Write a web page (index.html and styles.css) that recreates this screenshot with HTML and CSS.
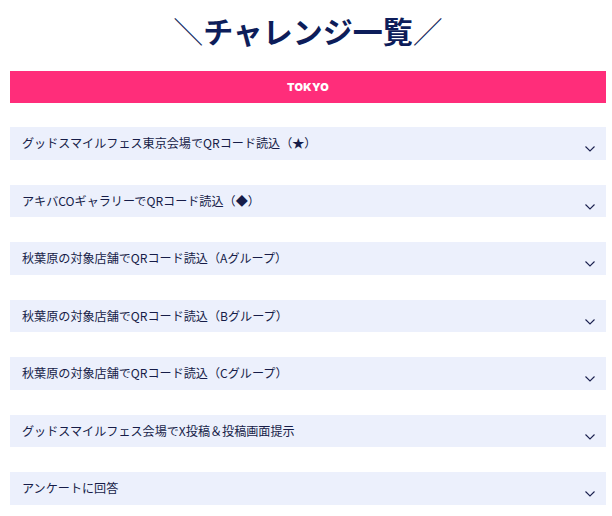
FILE: index.html
```html
<!DOCTYPE html>
<html lang="ja">
<head>
  <meta charset="UTF-8">
  <meta name="viewport" content="width=device-width, initial-scale=1.0">
  <title>チャレンジ一覧</title>
  <link rel="stylesheet" href="styles.css">
</head>
<body>
  <div class="wrap">
    <h1 class="title"><span class="slash">＼</span>チャレンジ一覧<span class="slash">／</span></h1>

    <div class="area">TOKYO</div>

    <ul class="challenges">
      <li class="challenge">
        <span class="challenge-name">グッドスマイルフェス東京会場でQRコード読込（★）</span>
        <svg class="chevron" width="10" height="6" viewBox="0 0 10 6"><path d="M0.5 0.5 L5 5 L9.5 0.5" /></svg>
      </li>
      <li class="challenge">
        <span class="challenge-name">アキバCOギャラリーでQRコード読込（◆）</span>
        <svg class="chevron" width="10" height="6" viewBox="0 0 10 6"><path d="M0.5 0.5 L5 5 L9.5 0.5" /></svg>
      </li>
      <li class="challenge">
        <span class="challenge-name">秋葉原の対象店舗でQRコード読込（Aグループ）</span>
        <svg class="chevron" width="10" height="6" viewBox="0 0 10 6"><path d="M0.5 0.5 L5 5 L9.5 0.5" /></svg>
      </li>
      <li class="challenge">
        <span class="challenge-name">秋葉原の対象店舗でQRコード読込（Bグループ）</span>
        <svg class="chevron" width="10" height="6" viewBox="0 0 10 6"><path d="M0.5 0.5 L5 5 L9.5 0.5" /></svg>
      </li>
      <li class="challenge">
        <span class="challenge-name">秋葉原の対象店舗でQRコード読込（Cグループ）</span>
        <svg class="chevron" width="10" height="6" viewBox="0 0 10 6"><path d="M0.5 0.5 L5 5 L9.5 0.5" /></svg>
      </li>
      <li class="challenge">
        <span class="challenge-name">グッドスマイルフェス会場でX投稿＆投稿画面提示</span>
        <svg class="chevron" width="10" height="6" viewBox="0 0 10 6"><path d="M0.5 0.5 L5 5 L9.5 0.5" /></svg>
      </li>
      <li class="challenge">
        <span class="challenge-name">アンケートに回答</span>
        <svg class="chevron" width="10" height="6" viewBox="0 0 10 6"><path d="M0.5 0.5 L5 5 L9.5 0.5" /></svg>
      </li>
    </ul>
  </div>
</body>
</html>
```

FILE: styles.css
```css
body {
  margin: 0;
  background: #fff;
  font-family: "Noto Sans CJK JP", "Noto Sans", sans-serif;
  color: #161c48;
}
.wrap {
  padding: 0 6px 0 10px;
}
.title {
  margin: 0;
  padding-top: 12px;
  height: 71px;
  box-sizing: border-box;
  text-align: center;
  font-size: 30px;
  line-height: 36px;
  font-weight: 700;
  color: #0d1d5a;
}
.slash {
  font-weight: 300;
}
.area {
  height: 32px;
  background: #ff2d7a;
  color: #fff;
  font-family: "Inter", "Noto Sans", sans-serif;
  font-weight: 900;
  font-size: 11px;
  letter-spacing: 0.3px;
  display: flex;
  align-items: center;
  justify-content: center;
}
.challenges {
  list-style: none;
  margin: 0;
  padding: 24px 0 0;
  display: flex;
  flex-direction: column;
  gap: 25px;
}
.challenge {
  height: 32.5px;
  background: #ecf0fc;
  display: flex;
  align-items: center;
  justify-content: space-between;
  padding: 0 11px 0 12px;
}
.challenge-name {
  font-size: 12.1px;
  line-height: 1;
}
.chevron {
  margin-top: 12px;
  fill: none;
  stroke: #1b2150;
  stroke-width: 1.1;
}
```
